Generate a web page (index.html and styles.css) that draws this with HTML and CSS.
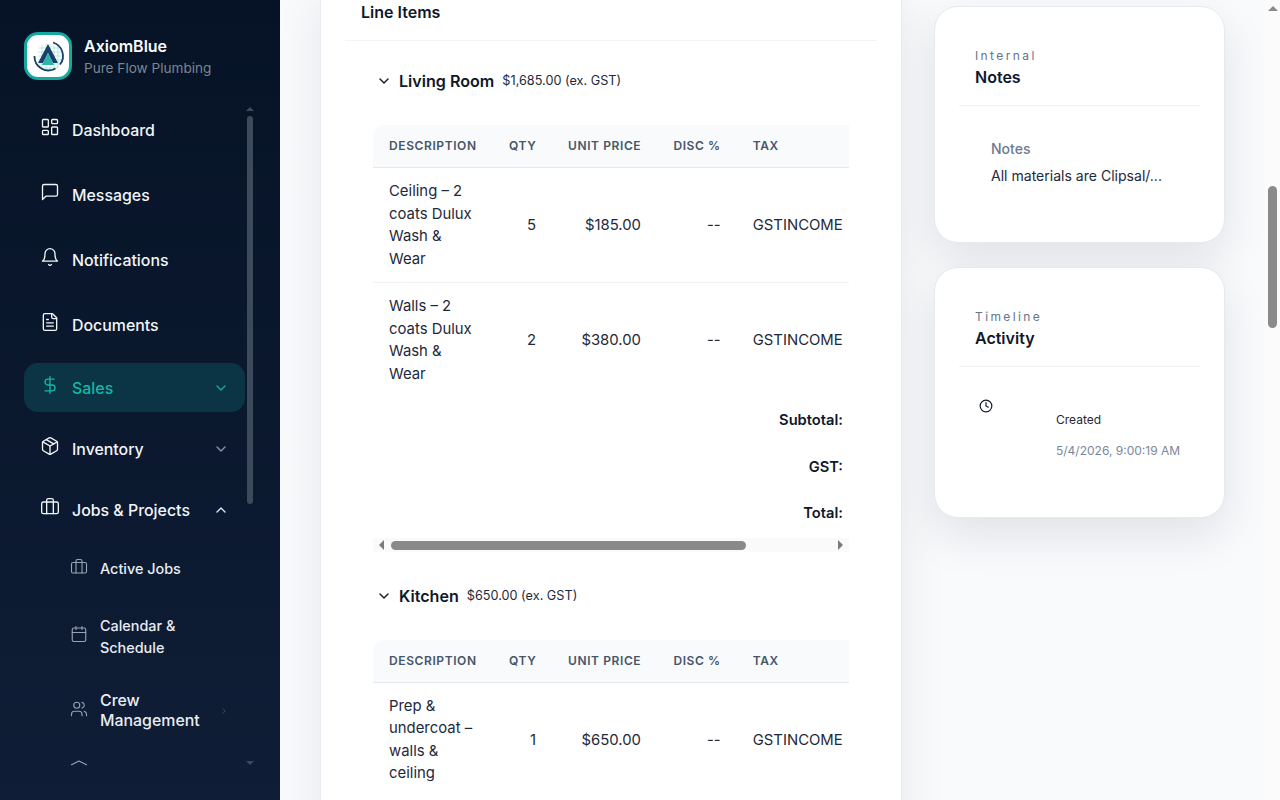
FILE: index.html
```html
<!DOCTYPE html>
<html lang="en">
<head>
<meta charset="utf-8">
<title>Quote – AxiomBlue</title>
<link rel="stylesheet" href="styles.css">
</head>
<body>
<svg class="defs" width="0" height="0" aria-hidden="true">
  <symbol id="i-down" viewBox="0 0 24 24"><path d="m6 9 6 6 6-6"/></symbol>
  <symbol id="i-up" viewBox="0 0 24 24"><path d="m18 15-6-6-6 6"/></symbol>
  <symbol id="i-brief" viewBox="0 0 24 24"><rect x="2" y="6" width="20" height="14" rx="2"/><path d="M16 20V4a2 2 0 0 0-2-2h-4a2 2 0 0 0-2 2v16"/></symbol>
</svg>
<div class="app">
  <aside class="sidebar">
    <div class="brand">
      <div class="logo">
        <svg viewBox="0 0 42 42" width="42" height="42">
          <g class="logo-grid"><path d="M12 13h20M11 17h23M11 21h24M11 25h24M12 29h22M13 33h18M15 10v25M19 9v27M23 9v27M27 9v27M31 11v22"/></g>
          <path class="logo-arc" d="M26 7.5a14 14 0 0 1 7 22"/>
          <path class="logo-arc" d="M7.5 21a14 14 0 0 0 21 12.5"/>
          <path class="logo-a" d="M21 9 11 28h5l5-10 5 10h5z"/>
          <path class="logo-t" d="M21 18 15 30h12z"/>
        </svg>
      </div>
      <div class="brand-text">
        <div class="brand-name">AxiomBlue</div>
        <div class="brand-sub">Pure Flow Plumbing</div>
      </div>
    </div>
    <nav class="nav">
      <div class="nav-scroll">
        <a class="item plain"><svg class="ic" viewBox="0 0 24 24"><rect x="3" y="3" width="7" height="9" rx="1"/><rect x="14" y="3" width="7" height="5" rx="1"/><rect x="14" y="12" width="7" height="9" rx="1"/><rect x="3" y="16" width="7" height="5" rx="1"/></svg><span>Dashboard</span></a>
        <a class="item plain"><svg class="ic" viewBox="0 0 24 24"><path d="M21 15a2 2 0 0 1-2 2H7l-4 4V5a2 2 0 0 1 2-2h14a2 2 0 0 1 2 2z"/></svg><span>Messages</span></a>
        <a class="item plain"><svg class="ic" viewBox="0 0 24 24"><path d="M6 8a6 6 0 0 1 12 0c0 7 3 9 3 9H3s3-2 3-9"/><path d="M10.3 21a1.94 1.94 0 0 0 3.4 0"/></svg><span>Notifications</span></a>
        <a class="item plain"><svg class="ic" viewBox="0 0 24 24"><path d="M15 2H6a2 2 0 0 0-2 2v16a2 2 0 0 0 2 2h12a2 2 0 0 0 2-2V7z"/><path d="M14 2v4a2 2 0 0 0 2 2h4"/><path d="M10 9H8M16 13H8M16 17H8"/></svg><span>Documents</span></a>
        <a class="item group active"><svg class="ic" viewBox="0 0 24 24"><path d="M12 2v20"/><path d="M17 5H9.5a3.5 3.5 0 0 0 0 7h5a3.5 3.5 0 0 1 0 7H6"/></svg><span>Sales</span><svg class="chev"><use href="#i-down"/></svg></a>
        <a class="item group"><svg class="ic" viewBox="0 0 24 24"><path d="M11 21.73a2 2 0 0 0 2 0l7-4A2 2 0 0 0 21 16V8a2 2 0 0 0-1-1.73l-7-4a2 2 0 0 0-2 0l-7 4A2 2 0 0 0 3 8v8a2 2 0 0 0 1 1.73z"/><path d="M12 22V12"/><path d="m3.3 7 8.7 5 8.7-5"/><path d="m7.5 4.27 9 5.15"/></svg><span>Inventory</span><svg class="chev"><use href="#i-down"/></svg></a>
        <a class="item group open"><svg class="ic"><use href="#i-brief"/></svg><span>Jobs &amp; Projects</span><svg class="chev"><use href="#i-up"/></svg></a>
        <div class="sub">
          <a class="sub-item jobs"><svg class="ic-sm"><use href="#i-brief"/></svg><span>Active Jobs</span></a>
          <a class="sub-item cal"><svg class="ic-sm" viewBox="0 0 24 24"><path d="M8 2v4M16 2v4"/><rect x="3" y="4" width="18" height="18" rx="2"/><path d="M3 10h18"/></svg><span>Calendar &amp; Schedule</span></a>
          <a class="sub-item crew"><svg class="ic-sm" viewBox="0 0 24 24"><path d="M16 21v-2a4 4 0 0 0-4-4H6a4 4 0 0 0-4 4v2"/><circle cx="9" cy="7" r="4"/><path d="M22 21v-2a4 4 0 0 0-3-3.87M16 3.13a4 4 0 0 1 0 7.75"/></svg><span>Crew Management</span><svg class="chev-r" viewBox="0 0 24 24"><path d="m9 18 6-6-6-6"/></svg></a>
          <a class="sub-item cut"><svg class="ic-sm" viewBox="0 0 24 24"><path d="M2 9 12 4l10 5"/></svg></a>
        </div>
      </div>
      <div class="nav-bar"><i class="tri up"></i><b></b><i class="tri dn"></i></div>
    </nav>
  </aside>

  <main class="main">
    <section class="doc">
      <h2 class="doc-title">Line Items</h2>
      <div class="doc-body">
        <div class="room">
          <div class="room-head"><svg class="room-chev"><use href="#i-down"/></svg><h3>Living Room</h3><span>$1,685.00 (ex. GST)</span></div>
          <div class="tbl-wrap">
            <table>
              <thead><tr><th class="c-d">Description</th><th class="c-q">Qty</th><th class="c-u">Unit Price</th><th class="c-x">Disc %</th><th class="c-t">Tax</th></tr></thead>
              <tbody>
                <tr><td class="c-d">Ceiling – 2 coats Dulux Wash &amp; Wear</td><td class="c-q">5</td><td class="c-u">$185.00</td><td class="c-x">--</td><td class="c-t">GSTINCOME</td></tr>
                <tr><td class="c-d">Walls – 2 coats Dulux Wash &amp; Wear</td><td class="c-q">2</td><td class="c-u">$380.00</td><td class="c-x">--</td><td class="c-t">GSTINCOME</td></tr>
              </tbody>
              <tfoot>
                <tr><td colspan="5">Subtotal:</td></tr>
                <tr><td colspan="5">GST:</td></tr>
                <tr><td colspan="5">Total:</td></tr>
              </tfoot>
            </table>
          </div>
          <div class="hbar"><i class="tri lf"></i><b></b><i class="tri rt"></i></div>
        </div>
        <div class="room room-next">
          <div class="room-head"><svg class="room-chev"><use href="#i-down"/></svg><h3>Kitchen</h3><span>$650.00 (ex. GST)</span></div>
          <div class="tbl-wrap">
            <table>
              <thead><tr><th class="c-d">Description</th><th class="c-q">Qty</th><th class="c-u">Unit Price</th><th class="c-x">Disc %</th><th class="c-t">Tax</th></tr></thead>
              <tbody>
                <tr><td class="c-d">Prep &amp; undercoat – walls &amp; ceiling</td><td class="c-q">1</td><td class="c-u">$650.00</td><td class="c-x">--</td><td class="c-t">GSTINCOME</td></tr>
              </tbody>
            </table>
          </div>
        </div>
      </div>
    </section>

    <aside class="rail">
      <section class="card notes">
        <header class="card-head"><div class="eyebrow">Internal</div><h3>Notes</h3></header>
        <div class="note-body"><div class="note-label">Notes</div><div class="note-text">All materials are Clipsal/...</div></div>
      </section>
      <section class="card activity">
        <header class="card-head"><div class="eyebrow">Timeline</div><h3>Activity</h3></header>
        <div class="act-body">
          <svg class="clock" viewBox="0 0 24 24"><circle cx="12" cy="12" r="10"/><path d="M12 6v6l4 2"/></svg>
          <div class="act-text"><div class="act-name">Created</div><div class="act-date">5/4/2026, 9:00:19 AM</div></div>
        </div>
      </section>
    </aside>
  </main>

  <div class="page-bar"><i class="tri up"></i><b></b></div>
</div>
</body>
</html>
```

FILE: styles.css
```css
* { box-sizing: border-box; }
html, body { margin: 0; height: 100%; overflow: hidden; }
body { font-family: Inter, "Liberation Sans", sans-serif; color: #0f172a; background: #f8fafc; }
.defs { position: absolute; }
h2, h3 { margin: 0; }

.app { display: flex; height: 800px; position: relative; overflow: hidden; }

/* Sidebar */
.sidebar { width: 280px; flex: none; height: 800px; background: linear-gradient(180deg, #061326 0%, #0f1d36 100%); display: flex; flex-direction: column; padding-top: 32px; position: relative; z-index: 1; }
.brand { display: flex; align-items: center; gap: 12px; margin-left: 24px; height: 48px; }
.logo { width: 48px; height: 48px; border-radius: 14px; background: #fff; border: 3px solid #14a89e; display: flex; align-items: center; justify-content: center; overflow: hidden; }
.logo svg { fill: none; }
.logo-grid path { stroke: #a5e3dd; stroke-width: .8; }
.logo-arc { stroke: #1b3f66; stroke-width: 1.8; }
.logo-a { fill: #1b3f66; }
.logo-t { fill: #2db5aa; }
.brand-name { font-size: 16px; font-weight: 600; line-height: 24px; color: #f8fafc; }
.brand-sub { font-size: 13.6px; line-height: 20px; color: #7d8592; }

.nav { position: relative; height: 666px; margin-top: 23px; overflow: hidden; }
.nav-scroll { padding-left: 24px; width: 245px; display: flex; flex-direction: column; gap: 12px; }
.item { display: flex; align-items: center; padding: 2px 16px 0; color: #f1f5f9; font-size: 15.9px; font-weight: 500; border-radius: 14px; }
.item.plain { height: 53px; }
.item.group { height: 49px; }
.item span { margin-left: 12px; flex: 1; }
.ic { width: 20px; height: 20px; flex: none; margin-top: -8px; fill: none; stroke: currentColor; stroke-width: 1.6; stroke-linecap: round; stroke-linejoin: round; }
.chev { width: 16px; height: 16px; flex: none; margin-top: -2px; fill: none; stroke: #8b94a3; stroke-width: 2; stroke-linecap: round; stroke-linejoin: round; }
.item.open .chev { stroke: #e2e8f0; }
.item.active { background: #0b3445; color: #14b8a6; }
.item.active .chev { stroke: #14a89e; }

.sub { display: flex; flex-direction: column; margin-top: -12px; padding-left: 46px; padding-right: 16px; font-weight: 500; color: #e8edf3; }
.sub-item { display: flex; align-items: center; position: relative; }
.sub-item span { margin-left: 12px; flex: 1; }
.ic-sm { width: 18px; height: 18px; flex: none; margin-top: -4px; fill: none; stroke: #98a2b3; stroke-width: 1.5; stroke-linecap: round; stroke-linejoin: round; }
.sub-item.jobs { height: 68px; padding-top: 2px; font-size: 14.4px; line-height: 22px; }
.sub-item.cal { height: 69px; font-size: 14.4px; line-height: 22px; }
.sub-item.cal .ic-sm { margin-top: -6px; }
.sub-item.crew { height: 79px; font-size: 15.9px; line-height: 20px; }
.sub-item.cut { height: 40px; align-items: flex-start; padding-top: 8px; }
.sub-item.cut .ic-sm { margin-top: 0; }
.chev-r { width: 10px; height: 10px; flex: none; margin-left: 16px; fill: none; stroke: #475569; stroke-width: 2; }

.nav-bar { position: absolute; left: 245px; top: 0; bottom: 0; width: 10px; display: flex; flex-direction: column; align-items: center; }
.nav-bar b { width: 6px; height: 388px; margin-top: 5px; border-radius: 3px; background: #3d4a5c; }
.nav-bar .tri.up { margin-top: 4px; border-bottom-color: #3d4a5c; }
.nav-bar .tri.dn { margin-top: auto; margin-bottom: 4px; border-top-color: #3d4a5c; }

.tri { display: block; width: 0; height: 0; border: 4px solid transparent; }
.tri.up { border-top-width: 0; border-bottom-width: 4px; }
.tri.dn { border-bottom-width: 0; border-top-width: 4px; }

/* Main */
.main { flex: 1; min-width: 0; display: flex; align-items: flex-start; background: #f8fafc; padding-left: 40px; }
.doc { width: 582px; flex: none; margin-top: -20px; height: 860px; background: #fff; border: 1px solid #e8ebf0; padding: 0 24px; box-shadow: 0 18px 45px rgba(15, 23, 42, .08); }
.doc-title { font-size: 16px; font-weight: 600; line-height: 24px; padding: 19px 16px 16px; height: 60px; border-bottom: 1px solid #f1f3f6; }
.doc-body { padding: 0 28px; }
.room-next { margin-top: 3.8px; }
.room-head { display: flex; align-items: center; height: 84px; padding: 0 0 4px 3px; }
.room-chev { width: 16px; height: 16px; fill: none; stroke: #0f172a; stroke-width: 2; stroke-linecap: round; stroke-linejoin: round; }
.room-head h3 { margin-left: 7px; font-size: 16.1px; font-weight: 600; line-height: 24px; }
.room-head span { margin-left: 8px; font-size: 12.7px; line-height: 18px; color: #1e293b; }
.tbl-wrap { width: 476px; overflow: hidden; }
table { width: 486px; table-layout: fixed; border-collapse: separate; border-spacing: 0; font-size: 14.88px; line-height: 22.5px; }
th { height: 43px; padding: 0 16px; background: #f8fafc; border-bottom: 1px solid #e2e8f0; font-size: 12px; font-weight: 600; letter-spacing: .6px; text-transform: uppercase; color: #475569; text-align: left; white-space: nowrap; }
th:first-child { border-top-left-radius: 12px; }
td { padding: 12px 16px; border-bottom: 1px solid #f1f3f6; vertical-align: middle; color: #1e293b; }
tbody tr:last-child td { border-bottom: 0; }
.c-d { width: 120px; }
.c-q { width: 59px; text-align: right; }
.c-u { width: 105px; text-align: right; }
.c-x { width: 79.7px; text-align: right; }
.c-t { width: 122.3px; text-align: left; white-space: nowrap; }
tfoot td { padding: 0 16px; height: 46.5px; font-size: 14.7px; text-align: right; font-weight: 600; color: #0f172a; border: 0; }
.hbar { width: 476px; height: 14px; margin-top: 1.5px; background: #fafafa; display: flex; align-items: center; }
.hbar b { width: 355px; height: 9px; margin-left: 7px; border-radius: 5px; background: #8a8a8a; }
.hbar .tri { border-width: 5px; }
.hbar .tri.lf { margin-left: 6px; border-left-width: 0; border-right-color: #7a7a7a; }
.hbar .tri.rt { margin-left: auto; margin-right: 6px; border-right-width: 0; border-left-color: #7a7a7a; }

/* Right rail */
.rail { width: 291px; flex: none; margin-left: 32px; padding-top: 6px; display: flex; flex-direction: column; gap: 24px; }
.card { background: #fff; border: 1px solid #e6e9ef; border-radius: 24px; padding: 0 24px; box-shadow: 0 18px 45px rgba(15, 23, 42, .1); }
.card.notes { height: 237px; }
.card.activity { height: 251px; }
.card-head { height: 99px; padding: 41px 16px 0; border-bottom: 1px solid #f1f3f6; }
.eyebrow { font-size: 12px; line-height: 16px; letter-spacing: 2.4px; color: #64748b; }
.card-head h3 { font-size: 16px; font-weight: 600; line-height: 24px; margin-top: 1px; }
.note-body { padding: 33px 32px 0; }
.note-label { font-size: 14px; font-weight: 500; line-height: 20px; color: #6b7a90; }
.note-text { font-size: 14.05px; line-height: 20px; margin-top: 7px; color: #1e293b; }
.act-body { display: flex; padding: 32px 0 0 20px; }
.clock { width: 14px; height: 14px; flex: none; fill: none; stroke: #0f172a; stroke-width: 2; stroke-linecap: round; stroke-linejoin: round; }
.act-text { margin-left: 63px; padding-top: 13px; font-size: 12px; line-height: 16px; }
.act-name { color: #1e293b; }
.act-date { margin-top: 15px; font-size: 12px; color: #7a889c; }

/* Page scrollbar */
.page-bar { position: absolute; right: 0; top: 0; bottom: 0; width: 15px; background: #fbfbfc; display: flex; flex-direction: column; align-items: center; }
.page-bar .tri.up { margin-top: 6px; border-bottom-color: #8a8a8a; border-width: 0 5px 5px; }
.page-bar b { width: 9px; height: 142px; margin-top: 175px; border-radius: 5px; background: #8a8a8a; }
```
